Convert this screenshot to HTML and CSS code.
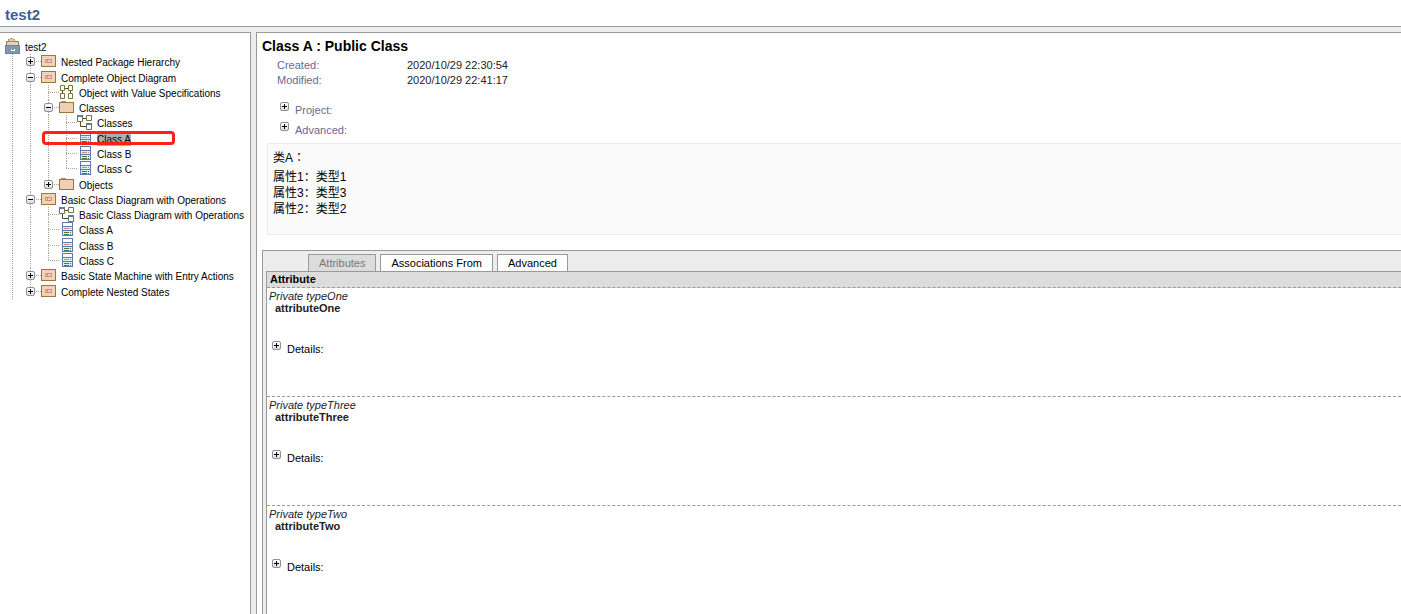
FILE: index.html
```html
<!DOCTYPE html>
<html lang="en">
  <head>
    <meta charset="UTF-8" />
    <meta name="viewport" content="width=device-width, initial-scale=1.0" />
    <title>test2</title>
    <link rel="stylesheet" href="styles.css">
  </head>
  <body>
    <svg class="defs" aria-hidden="true">
      <symbol id="i-root" viewBox="0 0 15 16">
        <path d="M1.500 8V3.500h12V8" fill="#ead0b4" stroke="#9a7444" />
        <path d="M3.500 3.500v-2h1l1-1h2l1 1h1v2z" fill="#ead0b4" stroke="#a98558" />
        <rect x="0.5" y="7.500" width="14" height="8" fill="#8296ad" stroke="#6d839c" />
        <path d="M6 11h1v1h2v-1h1v2H6z" fill="#fff" />
      </symbol>
      <symbol id="i-package" viewBox="0 0 15 12">
        <rect x="0.5" y="0.5" width="14" height="11" fill="#efd3b5" stroke="#9a7444" />
        <path d="M4.500 4.500h6v3h-6zM6.500 4.500v3" fill="#f3cdc6" stroke="#cf8a8e" />
      </symbol>
      <symbol id="i-folder" viewBox="0 0 15 13">
        <path d="M1.500 3.500l1-2h4l1 2" fill="#ead0b4" stroke="#b08a5c" />
        <rect x="0.5" y="2.500" width="14" height="10" fill="#efd0b2" stroke="#9a7444" />
      </symbol>
      <symbol id="i-object" viewBox="0 0 13 14">
        <path d="M4 3.500h5M2.500 5v4M10.500 5v4" stroke="#4c4a2a" />
        <path d="M0.500 0.500h4v5h-4zM8.500 0.500h4v5h-4zM0.500 8.500h4v5h-4zM8.500 8.500h4v5h-4z" fill="#fff" stroke="#75753f" />
      </symbol>
      <symbol id="i-diagram" viewBox="0 0 15 15">
        <path d="M6 3.500h4M3.500 6v5.500h6" fill="none" stroke="#4c4a2a" />
        <path d="M0.500 1.500h5v5h-5zM9.500 0.500h5v5h-5zM9.500 9.500h5v5h-5z" fill="#fff" stroke="#75753f" />
        <path d="M0 1h6M9 9h6" stroke="#5b7ba8" stroke-width="2" />
      </symbol>
      <symbol id="i-class" viewBox="0 0 11 14">
        <rect x="0.5" y="0.5" width="10" height="13" fill="#d9f2ee" stroke="#5c7dac" />
        <path d="M1 1h9v3H1z" fill="#fff" />
        <path d="M0 4.500h11M0 8.500h11" stroke="#5c7dac" />
        <path d="M2 6.500h5M8 6.500h1" stroke="#e07f7f" />
        <path d="M2 10.500h5M8 10.500h1M2 12.500h5M8 12.500h1" stroke="#47784a" />
      </symbol>
    </svg>

    <header class="topbar">test2</header>

    <div class="content">
      <nav class="sidebar">
        <ul class="tree">
          <li><svg class="icon root"><use href="#i-root" /></svg><a href="#">test2</a></li>
          <li><i class="line"></i><span class="branch"><button class="toggle plus" aria-label="Expand"></button></span><svg class="icon package"><use href="#i-package" /></svg><a href="#">Nested Package Hierarchy</a></li>
          <li><i class="line"></i><span class="branch"><button class="toggle" aria-label="Collapse"></button></span><svg class="icon package"><use href="#i-package" /></svg><a href="#">Complete Object Diagram</a></li>
          <li><i class="line"></i><i class="line"></i><i class="branch"></i><svg class="icon object"><use href="#i-object" /></svg><a href="#">Object with Value Specifications</a></li>
          <li><i class="line"></i><i class="line"></i><span class="branch"><button class="toggle" aria-label="Collapse"></button></span><svg class="icon folder"><use href="#i-folder" /></svg><a href="#">Classes</a></li>
          <li><i class="line"></i><i class="line"></i><i class="line"></i><i class="branch"></i><svg class="icon diagram"><use href="#i-diagram" /></svg><a href="#">Classes</a></li>
          <li class="current"><i class="line"></i><i class="line"></i><i class="line"></i><i class="branch"></i><svg class="icon class"><use href="#i-class" /></svg><a href="#">Class A</a></li>
          <li><i class="line"></i><i class="line"></i><i class="line"></i><i class="branch"></i><svg class="icon class"><use href="#i-class" /></svg><a href="#">Class B</a></li>
          <li><i class="line"></i><i class="line"></i><i class="line"></i><i class="branch last"></i><svg class="icon class"><use href="#i-class" /></svg><a href="#">Class C</a></li>
          <li><i class="line"></i><i class="line"></i><span class="branch last"><button class="toggle plus" aria-label="Expand"></button></span><svg class="icon folder"><use href="#i-folder" /></svg><a href="#">Objects</a></li>
          <li><i class="line"></i><span class="branch"><button class="toggle" aria-label="Collapse"></button></span><svg class="icon package"><use href="#i-package" /></svg><a href="#">Basic Class Diagram with Operations</a></li>
          <li><i class="line"></i><i class="line"></i><i class="branch"></i><svg class="icon diagram"><use href="#i-diagram" /></svg><a href="#">Basic Class Diagram with Operations</a></li>
          <li><i class="line"></i><i class="line"></i><i class="branch"></i><svg class="icon class"><use href="#i-class" /></svg><a href="#">Class A</a></li>
          <li><i class="line"></i><i class="line"></i><i class="branch"></i><svg class="icon class"><use href="#i-class" /></svg><a href="#">Class B</a></li>
          <li><i class="line"></i><i class="line"></i><i class="branch last"></i><svg class="icon class"><use href="#i-class" /></svg><a href="#">Class C</a></li>
          <li><i class="line"></i><span class="branch"><button class="toggle plus" aria-label="Expand"></button></span><svg class="icon package"><use href="#i-package" /></svg><a href="#">Basic State Machine with Entry Actions</a></li>
          <li><i class="line"></i><span class="branch last"><button class="toggle plus" aria-label="Expand"></button></span><svg class="icon package"><use href="#i-package" /></svg><a href="#">Complete Nested States</a></li>
        </ul>
      </nav>

      <main class="detail">
        <h1>Class A : Public Class</h1>
        <table class="meta">
          <tr><th scope="row">Created:</th><td>2020/10/29 22:30:54</td></tr>
          <tr><th scope="row">Modified:</th><td>2020/10/29 22:41:17</td></tr>
        </table>
        <div class="sections">
          <div class="expander"><button class="toggle plus" id="project" aria-labelledby="project-label"></button><label id="project-label" for="project">Project:</label></div>
          <div class="expander"><button class="toggle plus" id="advanced" aria-labelledby="advanced-label"></button><label id="advanced-label" for="advanced">Advanced:</label></div>
        </div>

        <div class="description">
          <p class="intro">类A：</p>
          <p>属性1：类型1<br>属性3：类型3<br>属性2：类型2</p>
        </div>

        <div class="tabbox">
          <div class="tabs">
            <button class="tab active">Attributes</button>
            <button class="tab">Associations From</button>
            <button class="tab">Advanced</button>
          </div>
          <table class="attributes">
            <thead>
              <tr><th>Attribute</th></tr>
            </thead>
            <tbody>
              <tr><td>
                <em>Private typeOne</em>
                <strong>attributeOne</strong>
                <div class="expander"><button class="toggle plus" id="d1" aria-label="Details"></button><label for="d1">Details:</label></div>
              </td></tr>
              <tr><td>
                <em>Private typeThree</em>
                <strong>attributeThree</strong>
                <div class="expander"><button class="toggle plus" id="d2" aria-label="Details"></button><label for="d2">Details:</label></div>
              </td></tr>
              <tr><td>
                <em>Private typeTwo</em>
                <strong>attributeTwo</strong>
                <div class="expander"><button class="toggle plus" id="d3" aria-label="Details"></button><label for="d3">Details:</label></div>
              </td></tr>
            </tbody>
          </table>
        </div>
      </main>
    </div>
  </body>
</html>
```
FILE: styles.css
```css
*,
*::before,
*::after {
  box-sizing: border-box;
}

body {
  margin: 0;
  height: 100vh;
  display: flex;
  flex-direction: column;
  overflow: hidden;
  background: #ededed;
  color: #000;
  font-family: Arial, "Liberation Sans", "Noto Sans CJK SC", sans-serif;
  font-size: 11px;
}

.defs {
  display: none;
}

.topbar {
  height: 27px;
  flex-shrink: 0;
  padding: 0 5px;
  border-bottom: 1px solid #8c9dad;
  background: #fff;
  color: #415f92;
  font-size: 15px;
  font-weight: bold;
  line-height: 30px;
}

.content {
  flex: 1;
  display: flex;
  gap: 5px;
  padding-top: 5px;
  min-height: 0;
}

/* tree */
.sidebar {
  width: 251px;
  flex-shrink: 0;
  padding: 6px 0 0 3px;
  border-top: 1px solid #999;
  border-right: 1px solid #999;
  background: #fff;
  overflow: hidden;
}

.tree {
  margin: 0;
  padding: 0;
  list-style: none;
}

.tree li {
  position: relative;
  display: flex;
  align-items: flex-start;
  height: 15px;
  white-space: nowrap;
}

.tree li:nth-child(7n + 2),
.tree li:nth-child(7n + 6) {
  height: 16px;
}

.tree a {
  margin: 2px 0 0 4px;
  color: #000;
  font-size: 10px;
  line-height: 13px;
  text-decoration: none;
}

.line,
.branch {
  position: relative;
  width: 18px;
  align-self: stretch;
  flex-shrink: 0;
}

.line::before,
.branch::before {
  content: "";
  position: absolute;
  left: 9px;
  top: 0;
  bottom: 0;
  width: 1px;
  background: repeating-linear-gradient(#a8a690 0 1px, transparent 1px 2px);
}

.branch::after {
  content: "";
  position: absolute;
  left: 9px;
  top: 7px;
  width: 11px;
  height: 1px;
  background: repeating-linear-gradient(90deg, #a8a690 0 1px, transparent 1px 2px);
}

.branch.last::before {
  bottom: 50%;
}

.icon {
  position: relative;
  flex-shrink: 0;
  width: 15px;
  margin: 1px 1px 0 2px;
}

.icon.root { height: 16px; margin-top: -1px; }
.icon.package { height: 12px; }
.icon.folder { height: 13px; margin-top: 0; }
.icon.object { width: 13px; height: 14px; margin: 0 2px 0 3px; }
.icon.diagram { height: 15px; margin-top: 0; }
.icon.class { width: 11px; height: 14px; margin: 0 2px 0 5px; }

.toggle {
  position: relative;
  display: block;
  flex-shrink: 0;
  width: 9px;
  height: 9px;
  padding: 0;
  border: 1px solid #8f8f9b;
  border-radius: 2px;
  background: linear-gradient(#fff, #dcdce4);
}

.branch .toggle {
  z-index: 1;
  margin: 3px 0 0 5px;
}

.toggle::before,
.toggle.plus::after {
  content: "";
  position: absolute;
  left: 1px;
  top: 3px;
  width: 5px;
  height: 1px;
  background: #000;
}

.toggle.plus::after {
  left: 3px;
  top: 1px;
  width: 1px;
  height: 5px;
}

.current a {
  background: #a9adb5;
}

.current::after {
  content: "";
  position: absolute;
  left: 39px;
  top: 0;
  width: 133px;
  height: 14px;
  border: 3px solid #fb2317;
  border-radius: 4px;
}

/* detail pane */
.detail {
  flex: 1;
  min-width: 0;
  padding: 5px 0 0 5px;
  border-top: 1px solid #999;
  border-left: 1px solid #999;
  background: #fff;
  overflow: hidden;
}

h1 {
  margin: 0;
  font-size: 14px;
  line-height: 16px;
}

.meta {
  margin: 4px 0 0 15px;
  border-collapse: collapse;
  line-height: 15px;
}

.meta th,
.meta td {
  padding: 0;
  font-weight: normal;
  text-align: left;
}

.meta th {
  width: 130px;
  color: #686894;
}

.meta td {
  color: #222;
}

.expander {
  display: flex;
  gap: 6px;
  height: 20px;
}

.expander label {
  line-height: 16px;
}

.sections {
  margin: 14px 0 0 18px;
  color: #686894;
}

.description {
  height: 92px;
  margin: 1px 0 15px 5px;
  padding: 6px 5px;
  border: 1px solid #ececec;
  border-right: 0;
  background: #fafafa;
  font-size: 12px;
  line-height: 16px;
}

.description p {
  margin: 0 0 3px;
}

.description .intro {
  font-family: Arial, "Liberation Sans", "Noto Sans CJK TC", sans-serif;
}

.tabbox {
  padding: 3px 0 0 3px;
  border-top: 1px solid #999;
  border-left: 1px solid #999;
  background: #ededed;
}

.tabs {
  display: flex;
  gap: 4px;
  margin-left: 42px;
  height: 17px;
}

.tab {
  padding: 0 10px;
  border: 1px solid #999;
  border-bottom: 0;
  background: #fff;
  color: #000;
  font-family: inherit;
  font-size: 11px;
  line-height: 15px;
}

.tab.active {
  background: #dcdcdc;
  color: #777;
}

.attributes {
  width: 100%;
  border-spacing: 0;
  border-top: 1px solid #999;
  border-left: 1px solid #999;
  background: #fff;
}

.attributes th {
  height: 16px;
  padding: 0 3px;
  border-bottom: 1px dashed #999;
  background: #dcdcdc;
  line-height: 15px;
  text-align: left;
}

.attributes td {
  height: 109px;
  padding: 2px 2px 0;
  border-bottom: 1px dashed #999;
  vertical-align: top;
}

.attributes em,
.attributes strong {
  display: block;
  color: #222;
  line-height: 12px;
}

.attributes strong {
  padding-left: 6px;
}

.attributes .expander {
  margin: 27px 0 0 3px;
}
```
